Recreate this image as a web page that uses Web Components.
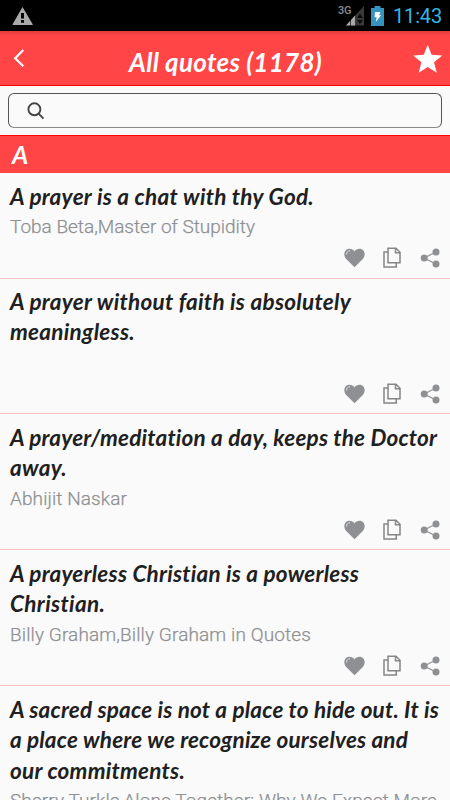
<!DOCTYPE html>
<html lang="en">
<head>
<meta charset="utf-8">
<title>All quotes</title>
<style>
  html, body {
    margin: 0;
    height: 100%;
    overflow: hidden;
    background: #fafafa;
  }
</style>
</head>
<body>
<quotes-app></quotes-app>

<script>
// Base class: clones the element's template into an open shadow root
class BaseElement extends HTMLElement {
    constructor() {
        super();
        this.attachShadow({mode: 'open'});
        let template = document.createElement('template');
        template.innerHTML = this.constructor.markup;
        this.shadowRoot.append(template.content.cloneNode(true));
    }
}

// One line of text, tracked so that it fills the given width
class FitLine extends BaseElement {
    static markup = `
        <style>
          :host { display: block; white-space: nowrap; }
          span { display: inline-block; }
        </style>
        <span><slot></slot></span>
    `;
    connectedCallback() {
        let span = this.shadowRoot.querySelector('span');
        let count = this.textContent.length;
        let target = +this.getAttribute('width');
        let natural = span.getBoundingClientRect().width;
        if (target && natural) {
            span.style.letterSpacing = (target - natural) / count + 'px';
        }
    }
}
customElements.define('fit-line', FitLine);

class StatusBar extends BaseElement {
    static markup = `
        <style>
          :host {
            display: flex;
            align-items: center;
            box-sizing: border-box;
            height: 31px;
            padding: 0 8px 0 12px;
            background: #000;
            font-family: Roboto, sans-serif;
          }
          svg { display: block; }
          .warning { margin-right: auto; }
          .net {
            align-self: flex-start;
            margin-top: 4px;
            font-size: 11px;
            line-height: 13px;
            font-weight: 500;
            color: #8c8c8c;
          }
          .signal { margin-left: -5px; }
          .battery { margin: 0 9px 0 7px; }
          .time { font-size: 20px; line-height: 31px; padding-top: 2px; color: #33b5e5; }
        </style>
        <svg class="warning" width="22" height="20" viewBox="0 0 22 20">
          <path fill="#aaa" d="M10.5 1 20.7 18.2Q21 19 20.2 19H1Q.2 19 .6 18.2Z"/>
          <path fill="#000" d="M9 7h3v5.6H9zM9 14h3v2.8H9z"/>
        </svg>
        <fit-line class="net" width="13">3G</fit-line>
        <svg class="signal" width="18" height="20" viewBox="0 0 18 20">
          <path fill="#393939" d="M18 0v19.500H0z"/>
          <path fill="#aaa" d="M0 19.500 4 15v4.500zM5 14l4-4.500v10H5z"/>
          <path fill="#0b0b0b" d="M11 12l3-4.500L17 12zM11 14h6l-3 4z"/>
        </svg>
        <svg class="battery" width="13" height="20" viewBox="0 0 13 20">
          <path fill="#3593bd" d="M3.500 0h6v2H13v18H0V2h3.500z"/>
          <path fill="#fff" d="M4 6h5.500L8 9.300h2.200L4.700 16l1-4.800H3.500z"/>
        </svg>
        <fit-line class="time" width="49">11:43</fit-line>
    `;
}
customElements.define('status-bar', StatusBar);

class TitleBar extends BaseElement {
    static markup = `
        <style>
          :host {
            display: grid;
            grid-template-columns: 129px 1fr 38px;
            align-items: center;
            box-sizing: border-box;
            height: 55px;
            border-bottom: 1px solid #f00;
            background: linear-gradient(#e33d3d, #ff4545 5px);
            color: #fff;
            font: italic 700 26px/32px Lato, sans-serif;
          }
          svg { display: block; }
          .back { margin: 0 0 0 13px; }
          .title { padding-top: 7px; }
          .star { margin-top: 2px; }
        </style>
        <svg class="back" width="12" height="18" viewBox="0 0 12 18">
          <path fill="none" stroke="#fff" stroke-width="2.200" d="M10.300 1 2.200 9.300l8.100 8"/>
        </svg>
        <div class="title"><slot></slot></div>
        <svg class="star" width="31" height="30" viewBox="0 0 31 30">
          <path fill="#fff" d="M15.700.8 19.600 10.800 30.300 11.400 22 18.300 24.800 28.800 15.700 23 6.700 28.800 9.400 18.300 1.100 11.400 11.800 10.800Z"/>
        </svg>
    `;
}
customElements.define('title-bar', TitleBar);

class SearchBox extends BaseElement {
    static markup = `
        <style>
          :host { display: block; height: 35px; padding: 7px 8px; background: #fafafa; }
          .field {
            display: flex;
            align-items: center;
            box-sizing: border-box;
            height: 35px;
            padding-left: 18px;
            border: 1px solid #555;
            border-bottom-color: #888;
            border-radius: 6px;
          }
          svg { display: block; }
        </style>
        <div class="field">
          <svg width="18" height="18" viewBox="0 0 18 18">
            <g fill="none" stroke="#444" stroke-width="1.900">
              <circle cx="7.400" cy="7.300" r="6"/>
              <path d="M11.600 11.600 16.500 16.700"/>
            </g>
          </svg>
        </div>
    `;
}
customElements.define('search-box', SearchBox);

class SectionHeader extends BaseElement {
    static markup = `
        <style>
          :host {
            display: block;
            box-sizing: border-box;
            height: 38px;
            padding: 3px 12px 0;
            border-top: 1px solid #f00;
            background: #ff4545;
            color: #fff;
            font: italic 700 25px/30px Lato, sans-serif;
          }
        </style>
        <slot></slot>
    `;
}
customElements.define('section-header', SectionHeader);

class QuoteActions extends BaseElement {
    static markup = `
        <style>
          :host { display: flex; align-items: center; justify-content: flex-end; }
          svg { display: block; }
          .copy { margin: 0 19px 0 18px; }
        </style>
        <svg width="21" height="20" viewBox="0 0 21 20">
          <path fill="#8e9093" d="M10.500 19.200 2.200 11C-1.300 7.400.3.700 5.500.7c2.200 0 4 1 5 2.700 1-1.700 2.800-2.700 5-2.700 5.200 0 6.800 6.700 3.300 10.300Z"/>
          <path fill="none" stroke="#e4e4e4" stroke-width=".9" d="M2.500 6.500C2.500 4.200 3.800 3 6 2.700"/>
        </svg>
        <svg class="copy" width="18" height="21" viewBox="0 0 18 21">
          <g fill="none" stroke="#858585" stroke-width="1.500">
            <path d="M5 1.200h8l4 4v10.600H5z"/>
            <path d="M12.500 1.200v4.500H17"/>
            <path d="M5 5H1v15h12.300v-4.200"/>
          </g>
        </svg>
        <svg width="20" height="20" viewBox="0 0 20 20">
          <path fill="none" stroke="#8e9093" stroke-width="1.200" d="M16 4 4 10l12 6"/>
          <g fill="#8e9093">
            <circle cx="4.200" cy="10" r="3.500"/>
            <circle cx="16" cy="4" r="3.500"/>
            <circle cx="16" cy="16" r="3.500"/>
          </g>
        </svg>
    `;
}
customElements.define('quote-actions', QuoteActions);

class QuoteItem extends BaseElement {
    static markup = `
        <style>
          :host {
            display: flex;
            flex-direction: column;
            box-sizing: border-box;
            padding: 9px 10px 9px 10px;
            border-bottom: 1px solid #fcc3c5;
          }
          .text {
            color: #202020;
            font: italic 700 22.500px/30.400px Lato, sans-serif;
          }
          .author {
            height: 30px;
            color: #8e9093;
            font: 300 19px/30px Roboto, sans-serif;
            -webkit-text-stroke: .25px #8e9093;
          }
          quote-actions { margin-top: auto; }
          :host(:first-child) { padding-bottom: 10px; }
          :host(:nth-child(2)) { padding-top: 8px; }
        </style>
        <div class="text"><slot></slot></div>
        <div class="author"><slot name="author"></slot></div>
        <quote-actions></quote-actions>
    `;
}
customElements.define('quote-item', QuoteItem);

class QuotesApp extends BaseElement {
    static markup = `
        <style>
          :host { display: block; height: 800px; overflow: hidden; background: #fafafa; }
          .list {
            display: grid;
            grid-template-rows: 106px 135px 136px 136px 166px;
          }
        </style>
        <status-bar></status-bar>
        <title-bar><fit-line width="193">All quotes (1178)</fit-line></title-bar>
        <search-box></search-box>
        <section-header>A</section-header>
        <div class="list">
          <quote-item>
            <fit-line width="304">A prayer is a chat with thy God.</fit-line>
            <fit-line slot="author" width="245">Toba Beta,Master of Stupidity</fit-line>
          </quote-item>
          <quote-item>
            <fit-line width="341">A prayer without faith is absolutely</fit-line>
            <fit-line width="125">meaningless.</fit-line>
          </quote-item>
          <quote-item>
            <fit-line width="427">A prayer/meditation a day, keeps the Doctor</fit-line>
            <fit-line width="57">away.</fit-line>
            <fit-line slot="author" width="117">Abhijit Naskar</fit-line>
          </quote-item>
          <quote-item>
            <fit-line width="349">A prayerless Christian is a powerless</fit-line>
            <fit-line width="95">Christian.</fit-line>
            <fit-line slot="author" width="301">Billy Graham,Billy Graham in Quotes</fit-line>
          </quote-item>
          <quote-item>
            <fit-line width="429">A sacred space is not a place to hide out. It is</fit-line>
            <fit-line width="398">a place where we recognize ourselves and</fit-line>
            <fit-line width="175">our commitments.</fit-line>
            <fit-line slot="author" width="427">Sherry Turkle,Alone Together: Why We Expect More</fit-line>
          </quote-item>
        </div>
    `;
}
customElements.define('quotes-app', QuotesApp);
</script>
</body>
</html>
